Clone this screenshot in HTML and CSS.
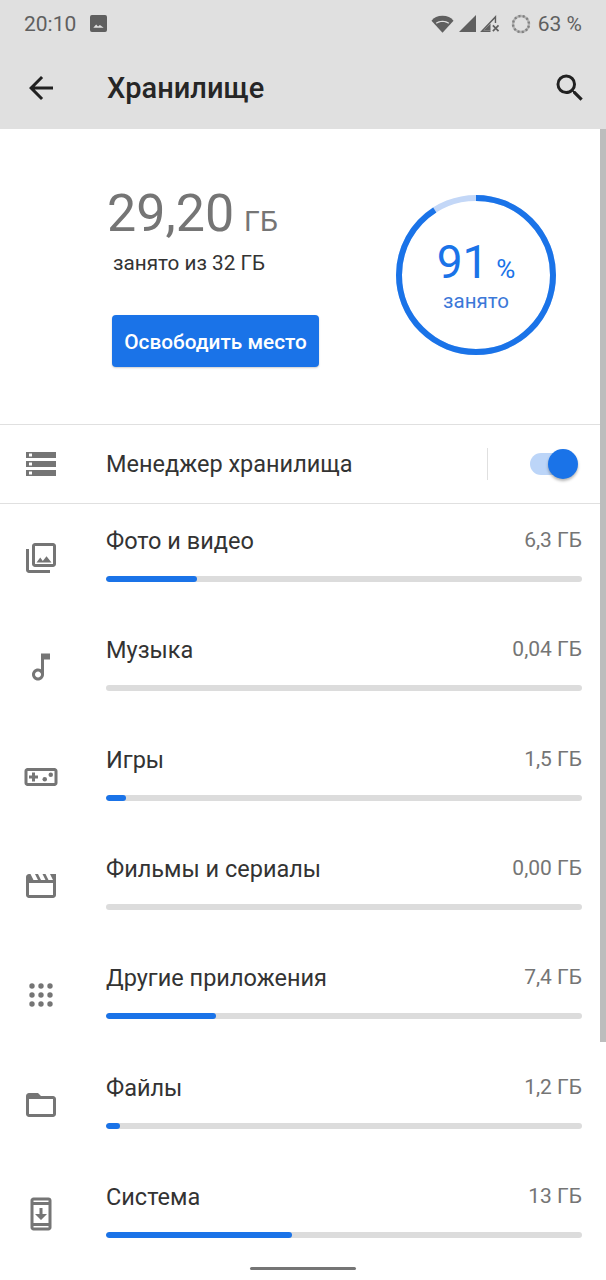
FILE: index.html
```html
<!DOCTYPE html>
<html lang="ru">
<head>
    <meta charset="UTF-8">
    <meta name="viewport" content="width=device-width, initial-scale=1.0">
    <title>Хранилище</title>
    <link rel="stylesheet" href="styles.css">
</head>
<body>
    <header class="appbar">
        <div class="status">
            <span class="status-time">20:10</span>
            <svg class="status-pic" viewBox="0 0 18 18"><path d="M2 0h14a2 2 0 0 1 2 2v14a2 2 0 0 1-2 2H2a2 2 0 0 1-2-2V2a2 2 0 0 1 2-2z" fill="#5f5f5f"/><path d="M3.5 13.5l3-3.5 2 2.2 2-1.5 4 2.8z" fill="#e0e0e0"/></svg>
            <span class="status-spacer"></span>
            <svg class="status-wifi" viewBox="0 0 24 18"><path d="M0.5 5.5C3 2.5 7 .5 12 .5s9 2 11.5 5L12 18z" fill="#5f5f5f"/><path d="M5 7.6C6.800 6.300 9.200 5.500 12 5.500s5.200.8 7 2.100l-.9 1.100C16.400 7.600 14.300 7 12 7s-4.400.6-6.100 1.700z" fill="#e0e0e0"/></svg>
            <svg class="status-signal" viewBox="0 0 18 18"><path d="M18 0v18H0z" fill="#5f5f5f"/></svg>
            <svg class="status-signal-off" viewBox="0 0 22 18"><path d="M17 0v8.500h-1.500V4L3.500 16.500H11V18H0z" fill="#5f5f5f"/><path d="M3.500 16.500L11 9v7.500z" fill="#5f5f5f"/><path d="M13.500 11l6 6M19.500 11l-6 6" stroke="#5f5f5f" stroke-width="1.800"/></svg>
            <svg class="status-battery" viewBox="0 0 20 20"><circle cx="10" cy="10" r="8" fill="none" stroke="#b5b5b5" stroke-width="2.400"/><circle cx="10" cy="10" r="8" fill="none" stroke="#5f5f5f" stroke-width="2.400" stroke-dasharray="2 2.200" pathLength="50" transform="rotate(40 10 10)" opacity="0.6"/></svg>
            <span class="status-level">63 %</span>
        </div>
        <div class="toolbar">
            <svg class="tool-icon back-icon" viewBox="0 0 24 24"><path d="M20 11H7.830l5.590-5.590L12 4l-8 8 8 8 1.410-1.410L7.830 13H20v-2z"/></svg>
            <h1>Хранилище</h1>
            <svg class="tool-icon" viewBox="0 0 24 24"><path d="M15.500 14h-.79l-.28-.27A6.471 6.471 0 0 0 16 9.500 6.500 6.500 0 1 0 9.500 16c1.610 0 3.090-.59 4.230-1.570l.27.28v.79l5 4.990L20.490 19l-4.990-5zm-6 0C7.010 14 5 11.990 5 9.500S7.010 5 9.500 5 14 7.010 14 9.500 11.990 14 9.500 14z"/></svg>
        </div>
    </header>

    <section class="summary">
        <div class="summary-left">
            <div class="used"><span class="used-num">29,20</span> <span class="used-unit">ГБ</span></div>
            <div class="used-of">занято из 32 ГБ</div>
            <div class="free-btn">Освободить место</div>
        </div>
        <div class="ring">
            <svg class="ring-svg" viewBox="0 0 160 160">
                <circle cx="80" cy="80" r="77" fill="none" stroke="#c3d7f7" stroke-width="6"/>
                <circle cx="80" cy="80" r="77" fill="none" stroke="#1a73e8" stroke-width="6" pathLength="100" stroke-dasharray="91 9" transform="rotate(-90 80 80)"/>
            </svg>
            <div class="ring-text">
                <div class="ring-pct"><span class="ring-num">91</span> <span class="ring-sign">%</span></div>
                <div class="ring-label">занято</div>
            </div>
        </div>
    </section>

    <section class="manager">
        <svg class="row-icon" viewBox="0 0 24 24"><path d="M2 20h20v-4H2v4zm2-3h2v2H4v-2zM2 4v4h20V4H2zm4 3H4V5h2v2zm-4 7h20v-4H2v4zm2-3h2v2H4v-2z"/></svg>
        <span class="manager-title">Менеджер хранилища</span>
        <span class="manager-line"></span>
        <span class="switch"><span class="switch-thumb"></span></span>
    </section>

    <section class="list">
        <div class="row">
            <svg class="row-icon" viewBox="0 0 24 24"><path d="M20 4v12H8V4h12m0-2H8c-1.100 0-2 .9-2 2v12c0 1.100.9 2 2 2h12c1.100 0 2-.9 2-2V4c0-1.100-.9-2-2-2zm-8.500 9.670l1.690 2.260 2.480-3.100L19 15H9zM2 6v14c0 1.100.9 2 2 2h14v-2H4V6H2z"/></svg>
            <div class="row-body">
                <div class="row-head"><span class="row-title">Фото и видео</span><span class="row-size">6,3 ГБ</span></div>
                <div class="bar"><div class="bar-fill" style="width: 19.1%"></div></div>
            </div>
        </div>
        <div class="row">
            <svg class="row-icon" viewBox="0 0 24 24"><path d="M12 3l.01 10.550c-.59-.34-1.270-.55-2-.55C7.790 13 6 14.790 6 17s1.790 4 4 4 4-1.790 4-4V7h4V3h-6zm-1.990 16c-1.100 0-2-.9-2-2s.9-2 2-2 2 .9 2 2-.9 2-2 2z"/></svg>
            <div class="row-body">
                <div class="row-head"><span class="row-title">Музыка</span><span class="row-size">0,04 ГБ</span></div>
                <div class="bar"></div>
            </div>
        </div>
        <div class="row">
            <svg class="row-icon" viewBox="0 0 24 24"><path d="M21 6H3c-1.100 0-2 .9-2 2v8c0 1.100.9 2 2 2h18c1.100 0 2-.9 2-2V8c0-1.100-.9-2-2-2zm0 10H3V8h18v8zM6 15h2v-2h2v-2H8V9H6v2H4v2h2v2z"/><circle cx="14.500" cy="13.500" r="1.500"/><circle cx="18.500" cy="10.500" r="1.500"/></svg>
            <div class="row-body">
                <div class="row-head"><span class="row-title">Игры</span><span class="row-size">1,5 ГБ</span></div>
                <div class="bar"><div class="bar-fill" style="width: 4.2%"></div></div>
            </div>
        </div>
        <div class="row">
            <svg class="row-icon" viewBox="0 0 24 24"><path d="M4 10h16v8H4v-8zM22 4h-4l2 4h-3l-2-4h-2l2 4h-3L10 4H8l2 4H7L5 4H4c-1.100 0-1.990.9-1.990 2L2 18c0 1.100.9 2 2 2h16c1.100 0 2-.9 2-2V4z" fill-rule="evenodd"/></svg>
            <div class="row-body">
                <div class="row-head"><span class="row-title">Фильмы и сериалы</span><span class="row-size">0,00 ГБ</span></div>
                <div class="bar"></div>
            </div>
        </div>
        <div class="row">
            <svg class="row-icon" viewBox="0 0 24 24"><circle cx="6" cy="6" r="1.800"/><circle cx="12" cy="6" r="1.800"/><circle cx="18" cy="6" r="1.800"/><circle cx="6" cy="12" r="1.800"/><circle cx="12" cy="12" r="1.800"/><circle cx="18" cy="12" r="1.800"/><circle cx="6" cy="18" r="1.800"/><circle cx="12" cy="18" r="1.800"/><circle cx="18" cy="18" r="1.800"/></svg>
            <div class="row-body">
                <div class="row-head"><span class="row-title">Другие приложения</span><span class="row-size">7,4 ГБ</span></div>
                <div class="bar"><div class="bar-fill" style="width: 23.1%"></div></div>
            </div>
        </div>
        <div class="row">
            <svg class="row-icon" viewBox="0 0 24 24"><path d="M20 6h-8l-2-2H4c-1.100 0-1.990.9-1.990 2L2 18c0 1.100.9 2 2 2h16c1.100 0 2-.9 2-2V8c0-1.100-.9-2-2-2zm0 12H4V8h16v10z"/></svg>
            <div class="row-body">
                <div class="row-head"><span class="row-title">Файлы</span><span class="row-size">1,2 ГБ</span></div>
                <div class="bar"><div class="bar-fill" style="width: 2.9%"></div></div>
            </div>
        </div>
        <div class="row">
            <svg class="row-icon" viewBox="0 0 24 24"><path d="M17 1.010L7 1c-1.100 0-2 .9-2 2v18c0 1.100.9 2 2 2h10c1.100 0 2-.9 2-2V3c0-1.100-.9-1.990-2-1.990zM17 21H7v-1h10v1zm0-3H7V6h10v12zM7 4V3h10v1H7zM16 12h-3V8h-2v4H8l4 4z"/></svg>
            <div class="row-body">
                <div class="row-head"><span class="row-title">Система</span><span class="row-size">13 ГБ</span></div>
                <div class="bar"><div class="bar-fill" style="width: 39.1%"></div></div>
            </div>
        </div>
    </section>

    <div class="scrollbar"></div>
    <div class="home-pill"></div>
</body>
</html>
```

FILE: styles.css
```css
html, body {
    margin: 0;
    padding: 0;
}
body {
    position: relative;
    width: 606px;
    height: 1280px;
    overflow: hidden;
    background-color: #fff;
    font-family: Roboto, "Noto Sans", sans-serif;
    color: #333;
}
.appbar {
    height: 129px;
    background-color: #e0e0e0;
}
.status {
    display: flex;
    align-items: center;
    height: 47px;
    padding: 0 24px;
    color: #5f5f5f;
    font-size: 21px;
}
.status-pic {
    width: 17px;
    height: 17px;
    margin-left: 14px;
}
.status-spacer {
    flex: 1;
}
.status-wifi {
    width: 23px;
    height: 18px;
}
.status-signal {
    width: 17px;
    height: 17px;
    margin-left: 5px;
}
.status-signal-off {
    width: 21px;
    height: 17px;
    margin-left: 4px;
}
.status-battery {
    width: 20px;
    height: 20px;
    margin-left: 10px;
}
.status-level {
    margin-left: 7px;
}
.toolbar {
    display: flex;
    align-items: center;
    height: 82px;
    padding: 0 18px 0 23px;
}
.tool-icon {
    width: 36px;
    height: 36px;
    fill: #212121;
}
.back-icon {
    margin-right: 48px;
}
.toolbar h1 {
    flex: 1;
    margin: 0;
    font-size: 29px;
    font-weight: 500;
    color: #262626;
}
.summary {
    display: flex;
    justify-content: space-between;
    height: 296px;
    padding: 0 50px 0 107px;
    box-sizing: border-box;
    border-bottom: 1px solid #e0e0e0;
}
.summary-left {
    display: flex;
    flex-direction: column;
    align-items: flex-start;
    padding-top: 52px;
}
.used {
    line-height: 66px;
    color: #757575;
}
.used-num {
    font-size: 52px;
}
.used-unit {
    font-size: 28.500px;
    margin-left: 6px;
}
.used-of {
    margin: -10px 0 0 6px;
    font-size: 20.700px;
    line-height: 28px;
}
.free-btn {
    display: flex;
    align-items: center;
    justify-content: center;
    width: 207px;
    height: 52px;
    margin: 38px 0 0 5px;
    padding-top: 2px;
    box-sizing: border-box;
    border-radius: 4px;
    background-color: #1a73e8;
    color: #fff;
    font-size: 20.800px;
    font-weight: 500;
    box-shadow: 0 1px 2px rgba(0, 0, 0, 0.2);
}
.ring {
    display: grid;
    width: 160px;
    height: 160px;
    margin-top: 66px;
}
.ring-svg, .ring-text {
    grid-area: 1 / 1;
}
.ring-svg {
    width: 160px;
    height: 160px;
}
.ring-text {
    display: flex;
    flex-direction: column;
    align-items: center;
    padding-top: 47px;
    color: #1a73e8;
}
.ring-pct {
    line-height: 40px;
}
.ring-num {
    font-size: 46px;
}
.ring-sign {
    font-size: 26px;
    margin-left: 4px;
}
.ring-label {
    margin-top: -3px;
    font-size: 20.500px;
    line-height: 22px;
    color: #3c78d8;
}
.manager {
    display: flex;
    align-items: center;
    height: 78px;
    padding-right: 32px;
    border-bottom: 1px solid #e0e0e0;
}
.row-icon {
    flex: none;
    width: 36px;
    height: 36px;
    margin: 0 47px 0 23px;
    fill: #757575;
}
.manager-title {
    flex: 1;
    font-size: 23.500px;
}
.manager-line {
    width: 1px;
    height: 32px;
    background-color: #e0e0e0;
}
.switch {
    display: block;
    position: relative;
    width: 44px;
    height: 22px;
    margin-left: 42px;
    border-radius: 11px;
    background-color: #bcd5f8;
}
.switch-thumb {
    position: absolute;
    top: -4px;
    right: -4px;
    width: 30px;
    height: 30px;
    border-radius: 50%;
    background-color: #1a73e8;
    box-shadow: 0 2px 3px rgba(0, 0, 0, 0.3);
}
.row {
    display: flex;
    align-items: flex-start;
    height: 109.330px;
    padding-right: 24px;
    box-sizing: border-box;
}
.row .row-icon {
    margin-top: 36px;
}
.row-body {
    flex: 1;
    padding-top: 22px;
}
.row-head {
    display: flex;
    justify-content: space-between;
    height: 30px;
    line-height: 30px;
}
.row-title {
    font-size: 23.500px;
}
.row-size {
    font-size: 21px;
    margin-top: -1px;
    color: #757575;
}
.bar {
    height: 6px;
    margin-top: 20px;
    border-radius: 3px;
    background-color: #dcdcdc;
    overflow: hidden;
}
.bar-fill {
    height: 100%;
    border-radius: 3px;
    background-color: #1a73e8;
}
.scrollbar {
    position: absolute;
    top: 129px;
    right: 0;
    width: 6px;
    height: 913px;
    background-color: #bdbdbd;
}
.home-pill {
    position: absolute;
    top: 1267px;
    left: 250px;
    width: 106px;
    height: 3px;
    border-radius: 2px;
    background-color: #757575;
}
```
